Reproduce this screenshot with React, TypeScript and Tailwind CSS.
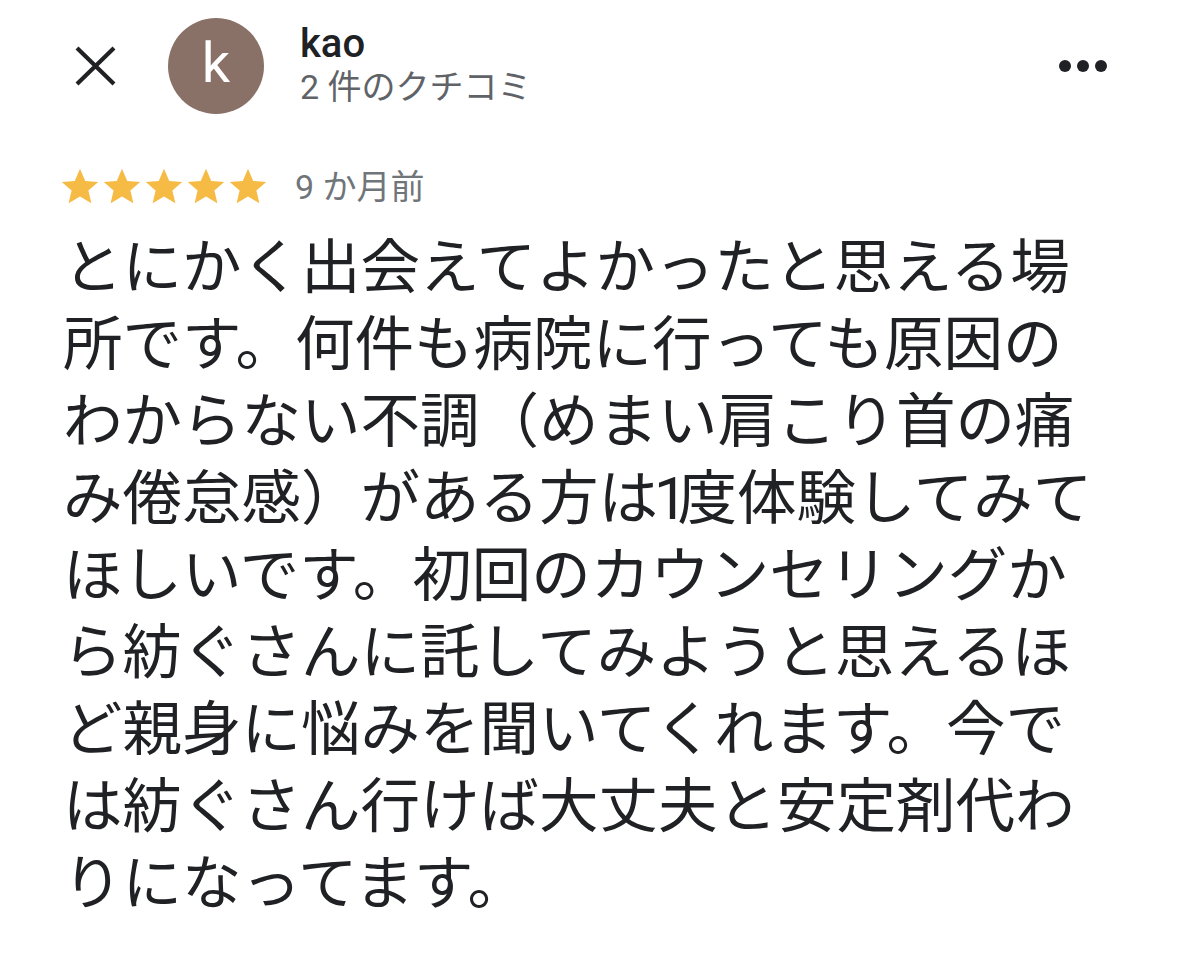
const lines = [
  'とにかく出会えてよかったと思える場',
  '所です。何件も病院に行っても原因の',
  'わからない不調（めまい肩こり首の痛',
  'み倦怠感）がある方は1度体験してみて',
  'ほしいです。初回のカウンセリングか',
  'ら紡ぐさんに託してみようと思えるほ',
  'ど親身に悩みを聞いてくれます。今で',
  'は紡ぐさん行けば大丈夫と安定剤代わ',
  'りになってます。',
];

function Star() {
  return (
    <svg viewBox="0 0 24 24" className="w-[42px] h-[42px]">
      <path
        d="M12 1.6l3 6.9 7.4.6-5.6 4.9 1.7 7.3L12 17.4l-6.5 3.9 1.7-7.3L1.6 9.1 9 8.5z"
        fill="#f5bb45"
      />
    </svg>
  );
}

// the "1" in the review is set narrow, as in the original
function Line({ text }: { text: string }) {
  const parts = text.split('1');
  if (parts.length === 1) return <div className="whitespace-nowrap">{text}</div>;
  return (
    <div className="whitespace-nowrap">
      {parts[0]}
      <span className="-ml-[4px] tracking-[-10px]">1</span>
      {parts[1]}
    </div>
  );
}

export default function App() {
  return (
    <div
      className="min-h-screen bg-white text-[#202124]"
      style={{ fontFamily: 'Roboto, "Noto Sans CJK JP", sans-serif' }}
    >
      {/* Header */}
      <div className="flex items-center pl-[75px] pr-[72px] pt-[18px]">
        <svg viewBox="0 0 41 40" className="w-[41px] h-[40px]">
          <path d="M2 2L39 38M39 2L2 38" stroke="#202124" strokeWidth="4.2" />
        </svg>
        <div className="ml-[52px] w-[96px] h-[96px] rounded-full bg-[#8a7168] flex items-center justify-center">
          <span className="text-white text-[56px] leading-none pb-[6px]">k</span>
        </div>
        <div className="ml-[36px] flex flex-col -mt-[2px]">
          <span className="text-[40px] leading-[44px] font-medium text-[#202124]">kao</span>
          <span className="text-[34px] leading-[42px] text-[#5f6368]">2 件のクチコミ</span>
        </div>
        <div className="ml-auto flex gap-[6px]">
          <span className="w-[12px] h-[12px] rounded-full bg-[#202124]" />
          <span className="w-[12px] h-[12px] rounded-full bg-[#202124]" />
          <span className="w-[12px] h-[12px] rounded-full bg-[#202124]" />
        </div>
      </div>

      {/* Rating */}
      <div className="flex items-center pl-[59px] mt-[52px]">
        <div className="flex">
          <Star />
          <Star />
          <Star />
          <Star />
          <Star />
        </div>
        <span className="ml-[26px] text-[34px] leading-none text-[#70757a]">9 か月前</span>
      </div>

      {/* Review text */}
      <div className="pl-[63px] mt-[22px] text-[59.5px] leading-[77px]">
        {lines.map((l) => (
          <Line key={l} text={l} />
        ))}
      </div>
    </div>
  );
}
